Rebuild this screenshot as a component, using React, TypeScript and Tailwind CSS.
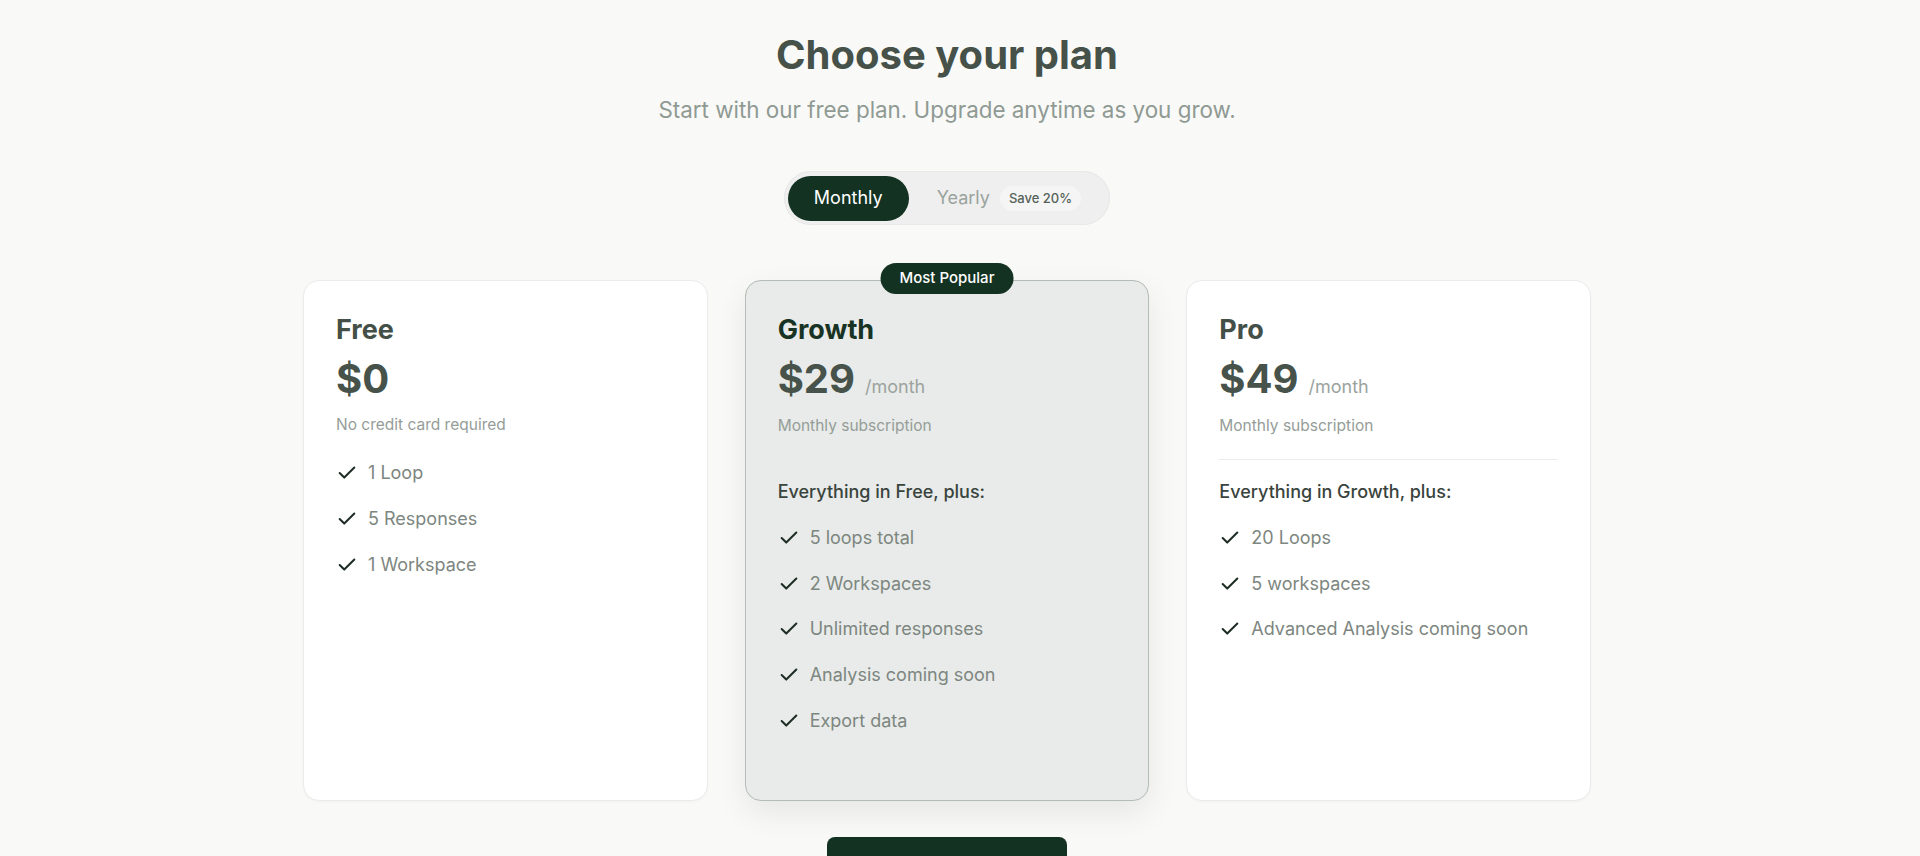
import React, { useState } from 'react';
import { Check } from 'lucide-react';

type Plan = {
  name: string;
  price: string;
  period?: string;
  note: string;
  lead?: string;
  features: string[];
  featured?: boolean;
  divider?: boolean;
};

const plans: Plan[] = [
  {
    name: 'Free',
    price: '$0',
    note: 'No credit card required',
    features: ['1 Loop', '5 Responses', '1 Workspace'],
  },
  {
    name: 'Growth',
    price: '$29',
    period: '/month',
    note: 'Monthly subscription',
    lead: 'Everything in Free, plus:',
    features: ['5 loops total', '2 Workspaces', 'Unlimited responses', 'Analysis coming soon', 'Export data'],
    featured: true,
    divider: true,
  },
  {
    name: 'Pro',
    price: '$49',
    period: '/month',
    note: 'Monthly subscription',
    lead: 'Everything in Growth, plus:',
    features: ['20 Loops', '5 workspaces', 'Advanced Analysis coming soon'],
    divider: true,
  },
];

const PlanCard: React.FC<{ plan: Plan }> = ({ plan }) => {
  return (
    <div
      className={`relative h-[521px] rounded-2xl border px-8 pt-8 ${
        plan.featured
          ? 'bg-[#e8ebe9] border-[#b3bcb7] shadow-[0_12px_32px_rgba(0,0,0,0.08)]'
          : 'bg-white border-[#ebebeb] shadow-[0_1px_3px_rgba(0,0,0,0.03)]'
      }`}
    >
      {plan.featured && (
        <div className="absolute -top-[18px] left-1/2 -translate-x-1/2 h-[31px] px-[19px] flex items-center rounded-full bg-[#133222] text-white text-[15px] font-medium whitespace-nowrap">
          Most Popular
        </div>
      )}
      <h3
        className={`text-[27px] leading-[34px] font-bold ${
          plan.featured ? 'text-[#183324]' : 'text-[#434f47]'
        }`}
      >
        {plan.name}
      </h3>
      <div className="mt-3 flex items-baseline">
        <span className="text-[40px] leading-[40px] font-bold text-[#46524a]">{plan.price}</span>
        {plan.period && <span className="ml-2.5 text-[18px] text-[#9ba39e]">{plan.period}</span>}
      </div>
      <p className="mt-[15px] text-[15.5px] leading-[22px] text-[#959d98]">{plan.note}</p>

      {plan.divider ? (
        <div className={`mt-[22px] h-px ${plan.featured ? 'bg-transparent' : 'bg-[#ececec]'}`} />
      ) : null}

      <ul className={`flex flex-col gap-[19.75px] ${plan.divider ? 'mt-[19px]' : 'mt-6'}`}>
        {plan.lead && (
          <li className="text-[18px] leading-[26px] font-medium text-[#39443d]">{plan.lead}</li>
        )}
        {plan.features.map((f) => (
          <li key={f} className="flex items-center gap-2.5 text-[18px] leading-[26px] text-[#7d8680]">
            <Check className="w-[22px] h-[22px] text-[#1d2d24] shrink-0" strokeWidth={2.2} />
            <span>{f}</span>
          </li>
        ))}
      </ul>
    </div>
  );
};

export default function App() {
  const [billing, setBilling] = useState<'monthly' | 'yearly'>('monthly');

  return (
    <div
      className="min-h-screen bg-[#f9f9f8] pr-[26px] pt-[34px] pb-10 flex flex-col items-center"
      style={{ fontFamily: 'Inter, "Noto Sans", sans-serif' }}
    >
      <h1 className="text-[40px] leading-[42px] font-bold text-[#465249]">Choose your plan</h1>
      <p className="mt-[20px] text-[22.4px] leading-[28px] text-[#8f9a93]">
        Start with our free plan. Upgrade anytime as you grow.
      </p>

      <div className="mt-[47px] flex items-center h-[54px] p-1 rounded-full bg-[#eeefee] shadow-[inset_0_0_0_1px_#e7e8e7]">
        <button
          onClick={() => setBilling('monthly')}
          className={`h-[45px] px-[26px] rounded-full text-lg ${
            billing === 'monthly' ? 'bg-[#133222] text-white' : 'text-[#9aa39d]'
          }`}
        >
          Monthly
        </button>
        <button
          onClick={() => setBilling('yearly')}
          className={`h-[45px] pl-7 pr-[25px] rounded-full text-lg flex items-center ${
            billing === 'yearly' ? 'bg-[#133222] text-white' : 'text-[#9aa39d]'
          }`}
        >
          Yearly
          <span className="ml-2.5 h-[25px] px-[9px] flex items-center rounded-full bg-[#f4f5f4] text-[13px] font-medium text-[#566259]">
            Save 20%
          </span>
        </button>
      </div>

      <div className="mt-[55px] grid grid-cols-3 gap-[37px] w-[1288px]">
        {plans.map((p) => (
          <PlanCard key={p.name} plan={p} />
        ))}
      </div>

      <button className="mt-9 w-[240px] h-16 rounded-lg bg-[#133222] text-white text-base font-medium">
        Get started
      </button>
    </div>
  );
}
